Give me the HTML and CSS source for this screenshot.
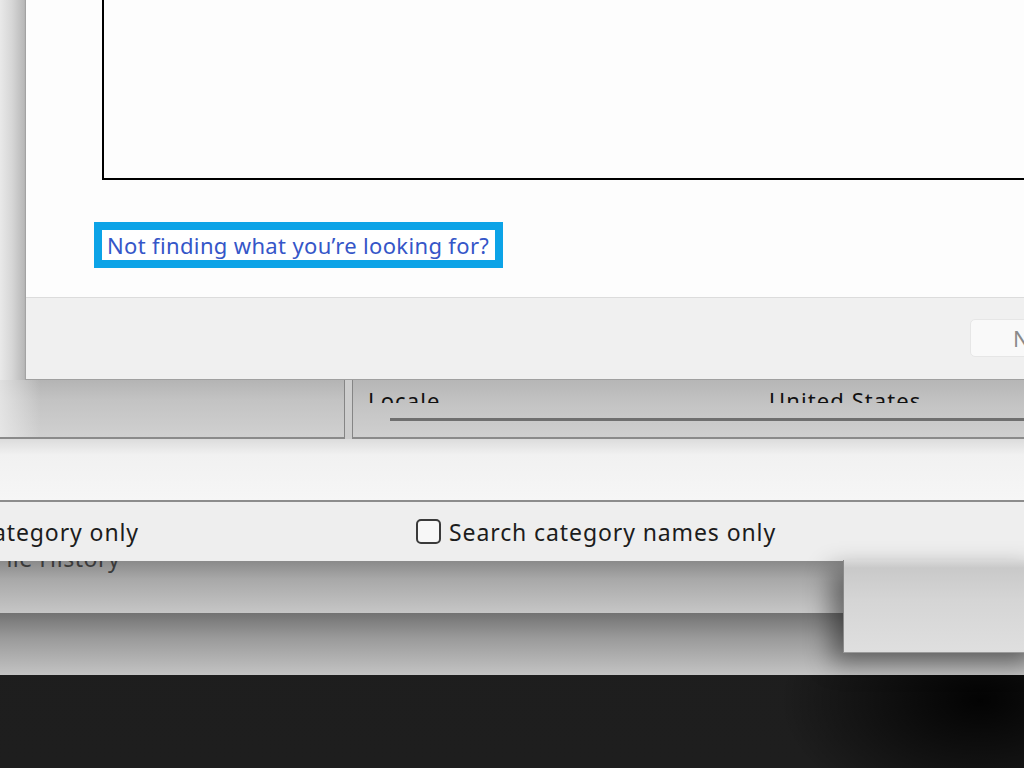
FILE: index.html
```html
<!DOCTYPE html>
<html lang="en">
<head>
    <meta charset="UTF-8">
    <title>Control Panel - Region</title>
    <link rel="stylesheet" href="styles.css">
</head>
<body>
    <div class="desktop">
        <div class="cp-window">
            <div class="cp-top"></div>

            <div class="locale-row">
                <div class="side-pane"></div>
                <div class="details-pane">
                    <div class="details-text">
                        <span class="col-name">Locale</span>
                        <span class="col-value">United States</span>
                    </div>
                    <div class="details-scroll"></div>
                </div>
            </div>

            <div class="gap-row"></div>

            <div class="search-bar">
                <label class="search-opt first">
                    <span class="check"></span>
                    <span>Search current category only</span>
                </label>
                <label class="search-opt">
                    <span class="check"></span>
                    <span>Search category names only</span>
                </label>
            </div>

            <div class="list-area">
                <div class="list-item">File History</div>
            </div>
            <div class="list-shadow"></div>
        </div>

        <div class="side-window"></div>

        <div class="dialog">
            <div class="dialog-body">
                <div class="result-box"></div>
                <a class="help-link" href="#">Not finding what you’re looking for?</a>
            </div>
            <div class="dialog-footer">
                <button class="next-btn" disabled>Next</button>
            </div>
        </div>
    </div>
</body>
</html>
```

FILE: styles.css
```css
body {
    margin: 0;
    font-family: "Noto Sans", "Open Sans", sans-serif;
    background-color: #1d1d1d;
}

.desktop {
    position: relative;
    width: 1024px;
    height: 768px;
    overflow: hidden;
    background:
        radial-gradient(ellipse 200px 120px at 980px 700px, rgba(0,0,0,0.9), rgba(0,0,0,0) 100%),
        linear-gradient(to bottom, #0e0e0e 0, #1c1c1c 40px, #1e1e1e 100%);
}

/* window behind the dialog */
.cp-window {
    width: 100%;
    height: 675px;
    display: flex;
    flex-direction: column;
}

.cp-top {
    height: 380px;
    background: linear-gradient(to right, #e9e9e9 0, #d6d6d6 12px, #b9b9b9 24px, #b0b0b0 25px);
}

.locale-row {
    height: 59px;
    display: flex;
    background: #cdcdcd;
}

.side-pane {
    width: 345px;
    border-right: 1px solid #858585;
    border-bottom: 2px solid #8a8a8a;
    box-sizing: border-box;
    background:
        linear-gradient(to right, rgba(235,235,235,0.8) 0, rgba(235,235,235,0) 40px),
        linear-gradient(to bottom, #b4b4b4 0, #c3c3c3 20px, #d0d0d0 100%);
}

.details-pane {
    flex: 1;
    margin-left: 7px;
    border-left: 1px solid #858585;
    border-bottom: 2px solid #8a8a8a;
    box-sizing: border-box;
    background: linear-gradient(to bottom, #b6b6b6 0, #c4c4c4 25px, #cfcfcf 100%);
}

.details-text {
    height: 23px;
    overflow: hidden;
    position: relative;
    font-size: 22px;
    letter-spacing: 1.1px;
    color: #111;
}

.col-name,
.col-value {
    position: absolute;
    top: 5px;
    line-height: 30px;
}

.col-name { left: 15px; }
.col-value { left: 416px; }

.details-scroll {
    margin: 15px 0 0 37px;
    height: 3px;
    background-color: #6f6f6f;
}

.gap-row {
    height: 61px;
    border-bottom: 2px solid #8c8c8c;
    background: linear-gradient(to bottom, #dcdcdc 0, #f1f1f1 16px, #f6f6f6 100%);
}

.search-bar {
    height: 59px;
    display: flex;
    align-items: center;
    background-color: #eeeeee;
    font-size: 23px;
    letter-spacing: 0.9px;
    color: #1c1c1c;
}

.search-opt {
    display: flex;
    align-items: center;
    gap: 8px;
    white-space: nowrap;
}

.search-opt.first {
    width: 139px;
    justify-content: flex-end;
    overflow: hidden;
    margin-right: 277px;
}

.check {
    width: 21px;
    height: 21px;
    border: 2px solid #3a3a3a;
    border-radius: 5px;
    background-color: #f7f7f7;
    flex: none;
}

.list-area {
    height: 52px;
    overflow: hidden;
    background: linear-gradient(to bottom, #8a8a8a 0, #a8a8a8 18px, #c6c6c6 100%);
}

.list-item {
    margin: -18px 0 0 -6px;
    font-size: 23px;
    letter-spacing: 0.5px;
    line-height: 30px;
    color: #3a3a3a;
}

.list-shadow {
    flex: 1;
    background: linear-gradient(to bottom, #727272 0, #9a9a9a 25px, #c3c3c3 100%);
}

/* small window on the right */
.side-window {
    position: absolute;
    left: 843px;
    top: 560px;
    width: 200px;
    height: 92px;
    border-left: 1px solid #8a8a8a;
    border-bottom: 1px solid #9a9a9a;
    background: linear-gradient(to bottom, #dadada 0, #c9c9c9 8px, #d5d5d5 40px, #dfdfdf 100%);
    box-shadow: -12px 10px 24px rgba(0,0,0,0.45);
}

/* front dialog */
.dialog {
    position: absolute;
    left: 25px;
    top: 0;
    width: 1020px;
    border-left: 1px solid #a3a3a3;
    border-bottom: 1px solid #a0a0a0;
    background-color: #f0f0f0;
}

.dialog-body {
    height: 297px;
    background-color: #fdfdfd;
    border-bottom: 1px solid #dcdcdc;
}

.result-box {
    margin-left: 76px;
    height: 178px;
    border-left: 2px solid #000;
    border-bottom: 2px solid #000;
}

.help-link {
    display: inline-block;
    margin: 42px 0 0 68px;
    padding: 0 6px 0 5px;
    border: 8px solid #0ca3e7;
    background-color: #fff;
    font-size: 22px;
    letter-spacing: 0.35px;
    line-height: 30px;
    color: #3556c8;
    text-decoration: none;
}

.dialog-footer {
    height: 81px;
    padding: 21px 0 0 944px;
    box-sizing: border-box;
}

.next-btn {
    width: 90px;
    height: 38px;
    padding: 0 0 0 42px;
    text-align: left;
    border: 1px solid #e6e6e6;
    border-radius: 5px;
    background-color: #f9f9f9;
    font-family: "Noto Sans", sans-serif;
    font-size: 22px;
    color: #8a8a8a;
}
```
